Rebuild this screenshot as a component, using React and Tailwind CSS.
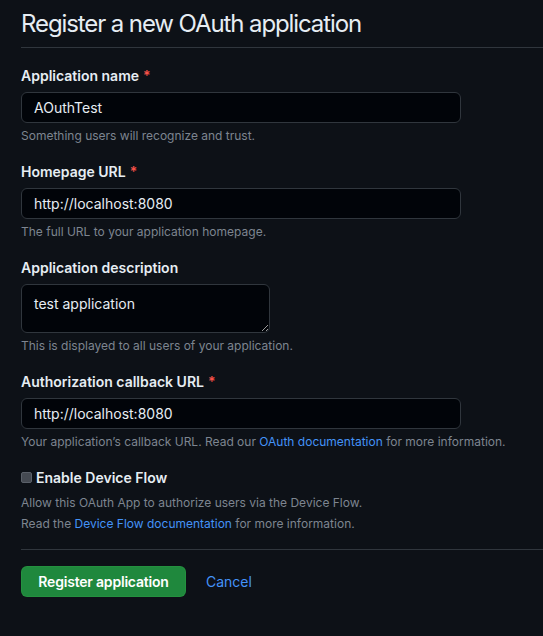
const Field = ({ label, required, children, hint }) => (
  <div className="mb-4">
    <label className="block text-[14px] leading-[21px] font-semibold text-[#e6edf3] mb-[6px]">
      {label}
      {required && <span className="text-[#f85149] ml-1">*</span>}
    </label>
    {children}
    <p className="mt-1 text-[12px] leading-[18px] text-[#7d8590]">{hint}</p>
  </div>
);

const inputCls =
  'block h-[31px] w-[440px] rounded-md border border-[#30363d] bg-[#010409] px-3 text-[14px] text-[#e6edf3] outline-none';

export default function App() {
  return (
    <div
      className="min-h-[636px] w-full overflow-hidden bg-[#0d1117] pl-[21px] pt-[9px]"
      style={{ fontFamily: 'Inter, "Noto Sans", sans-serif' }}
    >
      <h1 className="border-b border-[#30363d] pb-2 text-[24px] leading-[30px] font-normal tracking-[-1.1px] text-[#e6edf3] mb-[17px]">
        Register a new OAuth application
      </h1>

      <form onSubmit={(e) => e.preventDefault()}>
        <Field label="Application name" required hint="Something users will recognize and trust.">
          <input className={inputCls} defaultValue="AOuthTest" />
        </Field>

        <Field label="Homepage URL" required hint="The full URL to your application homepage.">
          <input className={inputCls} defaultValue="http://localhost:8080" />
        </Field>

        <Field label="Application description" hint="This is displayed to all users of your application.">
          <textarea
            className="block h-[49px] w-[249px] resize rounded-md border border-[#30363d] bg-[#010409] px-3 pt-[9px] pb-1 text-[14px] leading-[20px] text-[#e6edf3] outline-none scheme-dark"
            defaultValue="test application"
          />
        </Field>

        <Field
          label="Authorization callback URL"
          required
          hint={
            <>
              Your application’s callback URL. Read our{' '}
              <a href="#" className="text-[#4493f8]">OAuth documentation</a> for more information.
            </>
          }
        >
          <input className={inputCls} defaultValue="http://localhost:8080" />
        </Field>

        {/* Device flow */}
        <div className="pb-[16px] border-b border-[#30363d]">
          <label className="flex items-center gap-1 text-[14px] leading-[21px] font-semibold text-[#e6edf3]">
            <span className="inline-block h-[11px] w-[11px] rounded-[2px] border border-[#5a6069] bg-[#454a52]"></span>
            Enable Device Flow
          </label>
          <p className="mt-[6px] text-[12px] leading-[18px] text-[#7d8590]">
            Allow this OAuth App to authorize users via the Device Flow.
          </p>
          <p className="mt-[3px] text-[12px] leading-[18px] text-[#7d8590]">
            Read the <a href="#" className="text-[#4493f8]">Device Flow documentation</a> for more information.
          </p>
        </div>

        <div className="flex items-center gap-5 pt-[16px]">
          <button
            type="submit"
            className="h-[31px] w-[165px] rounded-md border border-[#2ea043]/40 bg-[#1f883d] text-[14px] font-semibold tracking-[-0.2px] text-white"
          >
            Register application
          </button>
          <a href="#" className="text-[14px] text-[#4493f8]">Cancel</a>
        </div>
      </form>
    </div>
  );
}
